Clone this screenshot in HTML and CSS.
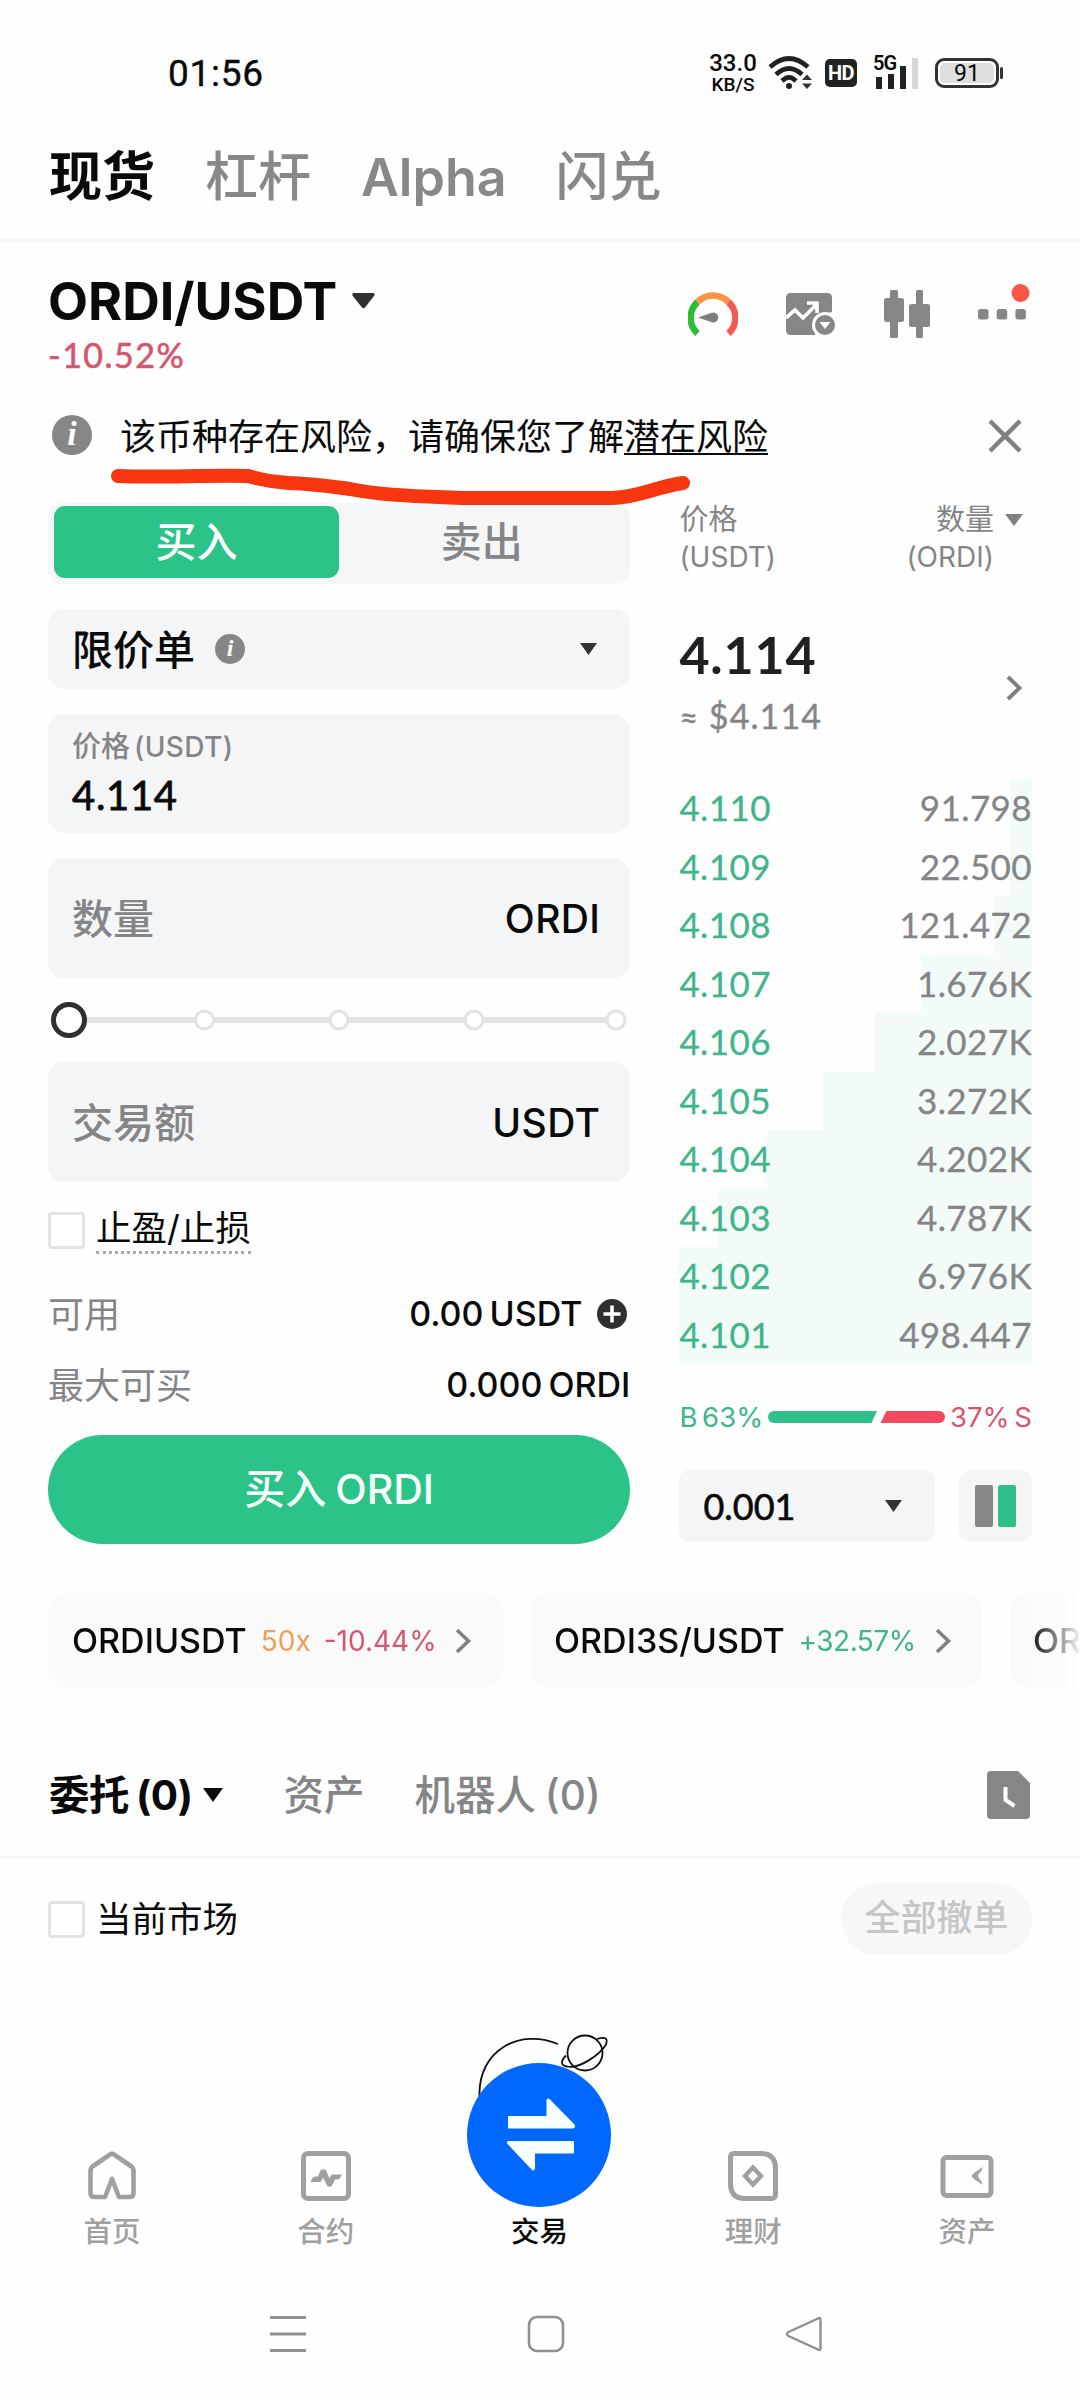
FILE: index.html
```html
<!DOCTYPE html>
<html lang="zh-CN">
<head>
<meta charset="utf-8">
<title>ORDI/USDT</title>
<link rel="stylesheet" href="styles.css">
</head>
<body>
<div class="screen">
  <header class="status">
    <span class="clock">01:56</span>
    <div class="status-right">
      <div class="speed"><b>33.0</b><span>KB/S</span></div>
      <svg class="wifi" width="46" height="34" viewBox="0 0 46 34"><g fill="none" stroke="#222" stroke-width="4.600"><path d="M2 11Q21 -6 40 11"/><path d="M8 18.500Q21 6.500 34 18.500"/><path d="M14 25Q21 18 28 25"/></g><circle cx="21" cy="30" r="3" fill="#222"/><path d="M34 24l5-5.500 5 5.500zM34 27.500l5 5.500 5-5.500z" fill="#333"/></svg>
      <span class="hd">HD</span>
      <div class="signal"><span class="gen">5G</span><svg width="44" height="32" viewBox="0 0 44 32"><path d="M1 20h6v12H1zM13 17h6v15h-6zM25 9h6v23h-6z" fill="#222"/><path d="M37 1h6v31h-6z" fill="#d8d8d8"/></svg></div>
      <div class="battery"><span>91</span></div>
    </div>
  </header>
  <nav class="top-tabs">
    <span class="tab t1 on">现货</span><span class="tab t2">杠杆</span><span class="tab t3">Alpha</span><span class="tab t4">闪兑</span>
  </nav>

  <section class="pair">
    <div class="pair-name">
      <h1><span>ORDI/USDT</span><svg width="23" height="16" viewBox="0 0 23 16"><path d="M1.500 0h20q2 1 .5 3L13 14.500q-1.500 1.500-3 0L.8 3Q-.5 1 1.500 0z" fill="#303030"/></svg></h1>
      <p class="change">-10.52%</p>
    </div>
    <div class="tools">
      <svg width="50" height="46" viewBox="0 0 50 46"><g fill="none" stroke-width="6.500"><path d="M9.500 43.500A21.500 21.500 0 0 1 9.500 12" stroke="#2ebc38"/><path d="M9.500 12A21.500 21.500 0 0 1 40.500 12" stroke="#fa9447"/><path d="M40.500 12A21.500 21.500 0 0 1 40.500 43.500" stroke="#f55a50"/></g><path d="M10 27.500L23 23a5 5 0 1 1 0 9z" fill="#7f7f82"/></svg>
      <svg width="50" height="46" viewBox="0 0 50 46"><path d="M5 0h36q5 0 5 5v14q-18 3-17 23H5q-5 0-5-5V5q0-5 5-5z" fill="#868689"/><path d="M0 25l9-8 8 8L31 11M21 10h10v10" fill="none" stroke="#fff" stroke-width="3.600"/><circle cx="39" cy="32" r="13" fill="#fff"/><circle cx="39" cy="32" r="10" fill="#868689"/><path d="M33.500 29h11L39 36z" fill="#fff"/></svg>
      <svg width="46" height="48" viewBox="0 0 46 48"><g fill="#868689"><rect x="6" width="8" height="48" rx="1.500"/><rect y="8" width="20" height="24" rx="2.500"/><rect x="32" width="7" height="48" rx="1.500"/><rect x="25" y="14" width="21" height="23" rx="2.500"/></g></svg>
      <svg width="52" height="36" viewBox="0 0 52 36"><g fill="#868689"><rect y="25" width="10.500" height="10.500" rx="2.500"/><rect x="18.700" y="25" width="10.500" height="10.500" rx="2.500"/><rect x="37.400" y="25" width="10.500" height="10.500" rx="2.500"/></g><circle cx="42.500" cy="9" r="9" fill="#fb5548"/></svg>
    </div>
  </section>

  <section class="notice">
    <i class="info big">i</i>
    <p>该币种存在风险，请确保您了解<u>潜在风险</u></p>
    <svg class="close" width="34" height="34" viewBox="0 0 34 34"><path d="M2 2l30 30M32 2L2 32" stroke="#808082" stroke-width="4.500"/></svg>
    <svg class="marker" width="590" height="50" viewBox="110 460 590 50"><path d="M118 476C160 478 200 475 248 476C262 480 273 482 289 483C318 484 335 487 350 489C385 496 420 496 461 498L613 498C640 497 655 487 683 483" fill="none" stroke="#f7360f" stroke-width="14" stroke-linecap="round"/></svg>
  </section>

  <main class="trade">
    <div class="form">
      <div class="seg"><span class="buy">买入</span><span class="sell">卖出</span></div>
      <div class="box type"><span class="strong">限价单</span><i class="info">i</i><svg class="end" width="17" height="12" viewBox="0 0 17 12"><path d="M0 0h17L8.500 12z" fill="#333"/></svg></div>
      <div class="box price"><label>价格<span>(USDT)</span></label><b>4.114</b></div>
      <div class="box amount"><span>数量</span><em>ORDI</em></div>
      <svg class="slider" width="582" height="40" viewBox="0 0 582 40"><path d="M20 20h548" stroke="#e2e2e2" stroke-width="6"/><circle cx="21" cy="20" r="15.500" fill="#fff" stroke="#303033" stroke-width="5"/><g fill="#fff" stroke="#e2e2e2" stroke-width="3"><circle cx="156.500" cy="20" r="9"/><circle cx="291" cy="20" r="9"/><circle cx="426" cy="20" r="9"/><circle cx="568" cy="20" r="9"/></g></svg>
      <div class="box total"><span>交易额</span><em>USDT</em></div>
      <div class="check tpsl"><i></i><span>止盈/止损</span></div>
      <div class="line avail"><span>可用</span><em>0.00 USDT</em><svg width="30" height="30" viewBox="0 0 30 30"><circle cx="15" cy="15" r="15" fill="#303033"/><path d="M15 6.500v17M6.500 15h17" stroke="#fff" stroke-width="3.500"/></svg></div>
      <div class="line max"><span>最大可买</span><em>0.000 ORDI</em></div>
      <div class="submit">买入 ORDI</div>
    </div>
    <div class="book">
      <div class="book-head">
        <div>价格<br><span>(USDT)</span></div>
        <div class="r">数量<br><span>(ORDI)</span></div>
        <svg width="18" height="12" viewBox="0 0 18 12"><path d="M0 0h18L9 12z" fill="#808082"/></svg>
      </div>
      <div class="last"><div><b>4.114</b><p><span>≈</span> $4.114</p></div><svg width="18" height="26" viewBox="0 0 18 26"><path d="M3 2l11.500 11L3 24" fill="none" stroke="#808082" stroke-width="4"/></svg></div>
      <div class="rows">
        <div class="row"><i style="width:22px"></i><span>4.110</span><em>91.798</em></div>
        <div class="row"><i style="width:22px"></i><span>4.109</span><em>22.500</em></div>
        <div class="row"><i style="width:38px"></i><span>4.108</span><em>121.472</em></div>
        <div class="row"><i style="width:111px"></i><span>4.107</span><em>1.676K</em></div>
        <div class="row"><i style="width:157px"></i><span>4.106</span><em>2.027K</em></div>
        <div class="row"><i style="width:209px"></i><span>4.105</span><em>3.272K</em></div>
        <div class="row"><i style="width:265px"></i><span>4.104</span><em>4.202K</em></div>
        <div class="row"><i style="width:314px"></i><span>4.103</span><em>4.787K</em></div>
        <div class="row"><i style="width:353px"></i><span>4.102</span><em>6.976K</em></div>
        <div class="row"><i style="width:353px"></i><span>4.101</span><em>498.447</em></div>
      </div>
      <div class="ratio"><span class="g">B 63%</span><svg width="177" height="12" viewBox="0 0 177 12"><path d="M6 0h103l-5.500 12H6A6 6 0 0 1 6 0z" fill="#2fc08a"/><path d="M118.500 0H171a6 6 0 0 1 0 12h-58.500z" fill="#f24a5c"/></svg><span class="d">37% S</span></div>
      <div class="book-foot">
        <div class="step"><span>0.001</span><svg width="17" height="12" viewBox="0 0 17 12"><path d="M0 0h17L8.500 12z" fill="#333"/></svg></div>
        <div class="layout"><i></i><i class="green"></i></div>
      </div>
    </div>
  </main>

  <section class="pills">
    <div class="pill p1"><b>ORDIUSDT</b><span class="o">50x</span><span class="d">-10.44%</span><svg width="18" height="26" viewBox="0 0 18 26"><path d="M3 2l11.500 11L3 24" fill="none" stroke="#808082" stroke-width="3.500"/></svg></div>
    <div class="pill p2"><b>ORDI3S/USDT</b><span class="g">+32.57%</span><svg width="18" height="26" viewBox="0 0 18 26"><path d="M3 2l11.500 11L3 24" fill="none" stroke="#808082" stroke-width="3.500"/></svg></div>
    <div class="pill p3"><b>OR</b></div>
  </section>

  <nav class="order-tabs">
    <span class="o1">委托 (0)</span><svg class="caret" width="20" height="14" viewBox="0 0 20 14"><path d="M0 0h20L10 14z" fill="#0a0a0a"/></svg><span class="o2">资产</span><span class="o3">机器人 (0)</span>
    <svg class="end" width="43" height="48" viewBox="0 0 43 48"><path d="M4 0h27l12 12v32q0 4-4 4H4q-4 0-4-4V4q0-4 4-4z" fill="#868689"/><path d="M18.500 16v13l9 6" fill="none" stroke="#fff" stroke-width="4"/></svg>
  </nav>
  <section class="filter"><div class="check"><i></i><span>当前市场</span></div><div class="cancel">全部撤单</div></section>

  <nav class="bottom">
    <div class="item"><svg width="54" height="54" viewBox="0 0 54 54"><path d="M5.500 21Q5.500 19 7.500 17.500L25 5.500q2-1.500 4 0l17.500 12q2 1.500 2 3.500V44q0 4-4 4H34L27 30 20 48H9.500q-4 0-4-4z" fill="none" stroke="#a0a0a0" stroke-width="4.600" stroke-linejoin="round"/></svg><span>首页</span></div>
    <div class="item"><svg width="54" height="54" viewBox="0 0 54 54"><rect x="4.500" y="4.500" width="45" height="45" rx="4.500" fill="none" stroke="#a0a0a0" stroke-width="5"/><path d="M11.500 33l2-4q1-1.500 3-1.500h2.500l2.500-6q.5-1 1.500-1h2.500q1 0 1.500 1l3.500 8 1-2.500q.7-1.500 2-1.500H43l-2 3.500q-.8 1.500-2.500 1.500H36l-3 6q-.5 1-1.500 1h-2q-1 0-1.500-1l-4-8-1 2.500q-.8 2-2.500 2z" fill="#a0a0a0"/></svg><span>合约</span></div>
    <div class="item active"><svg class="orb" width="152" height="182" viewBox="463 2028 152 182"><g fill="none" stroke="#111" stroke-width="1.800"><path d="M479.500 2096C478 2050 520 2028 558 2044"/><circle cx="585" cy="2053" r="17.500"/><path d="M597 2039c9-2.500 11-.5 9 5.500-6 10-27 25-39 22-7-1-6-6-1-11"/></g><circle cx="539" cy="2135" r="72" fill="#0168fe"/><path d="M509 2116h37.500v-16q1.500-2.500 3.500-.5l24.500 25q1.500 3.500-1.500 4h-64q-1 0-1-1v-10.500q0-1 1-1zM508 2141h65q1 0 1 1v10.500q0 1-1 1h-38v15.500q-1.500 2.500-3.500.5L507.500 2144q-1.500-2 .5-3z" fill="#f8ffff"/></svg><span>交易</span></div>
    <div class="item"><svg width="54" height="54" viewBox="0 0 54 54"><path d="M8 4.500h27q14.500 0 14.500 15v26q0 4-4 4H19q-14.500 0-14.500-15v-26q0-4 3.500-4z" fill="none" stroke="#a0a0a0" stroke-width="5"/><path d="M27 18.500l8 8.500-8 8.500-8-8.500z" fill="none" stroke="#a0a0a0" stroke-width="4.400"/></svg><span>理财</span></div>
    <div class="item"><svg width="54" height="54" viewBox="0 0 54 54"><rect x="3" y="8.500" width="48" height="38" rx="3.500" fill="none" stroke="#a0a0a0" stroke-width="5"/><path d="M42.500 18q0 3-2.500 5.500-4 3.500 0 7 2.500 2.500 2.500 5.500L33.500 29.500q-3.500-2.500 0-5z" fill="#a0a0a0"/></svg><span>资产</span></div>
  </nav>
  <footer class="system">
    <svg width="38" height="38" viewBox="0 0 38 38"><path d="M1 2.500h36M1 19h36M1 35.500h36" stroke="#909090" stroke-width="3"/></svg>
    <svg width="38" height="38" viewBox="0 0 38 38"><rect x="2" y="2" width="34" height="34" rx="8" fill="none" stroke="#909090" stroke-width="2.600"/></svg>
    <svg width="38" height="38" viewBox="0 0 38 38"><path d="M33 3.500Q35.500 2 35.500 5v28q0 3-2.500 1.500L3.500 21q-3-2 0-4z" fill="none" stroke="#909090" stroke-width="2.400"/></svg>
  </footer>
</div>
</body>
</html>
```
FILE: styles.css
```css
* { box-sizing: border-box; margin: 0; padding: 0; }
body { background: #fefefe; color: #0a0a0a; font-family: Inter, "Noto Sans CJK SC", sans-serif; }
i, em { font-style: normal; }
svg { display: block; flex: none; }
span, em, b { white-space: nowrap; }
.screen { width: 1080px; height: 2400px; display: flex; flex-direction: column; overflow: hidden; }
.screen > * { flex: none; }

.status { height: 118px; padding: 27px 76px 0 168px; display: flex; justify-content: space-between; align-items: flex-start; }
.clock { font: 400 37px/93px Roboto, sans-serif; letter-spacing: .7px; -webkit-text-stroke: .4px; }
.status-right { display: flex; height: 92px; align-items: center; }
.speed { width: 52px; height: 44px; margin-right: 9px; display: flex; flex-direction: column; align-items: center; }
.speed b { font: 500 24px/24px Roboto, sans-serif; }
.speed span { font: 500 19px/20px Roboto, sans-serif; }
.wifi { margin-right: 11px; }
.hd { width: 32px; height: 28px; margin-right: 18px; border-radius: 5px; background: #222; color: #fff; font: 700 20px/29px Roboto, sans-serif; text-align: center; letter-spacing: -.5px; }
.signal { position: relative; margin-right: 16px; }
.gen { position: absolute; left: -2px; top: -4px; font: 600 20px/21px Roboto, sans-serif; letter-spacing: -1px; }
.battery { width: 64px; height: 30px; margin-right: 5px; border: 3px solid #333; border-radius: 9px; padding: 2px; position: relative; }
.battery span { display: block; height: 20px; border-radius: 5px; background: #dedede; font: 400 23px/21px Roboto, sans-serif; text-align: center; }
.battery::after { content: ""; position: absolute; right: -7px; top: 6px; width: 3px; height: 12px; border-radius: 2px; background: #333; }

.top-tabs { height: 124px; padding-left: 49px; border-bottom: 3px solid #f6f6f6; display: flex; gap: 50px; color: #888; font-size: 53px; font-weight: 500; line-height: 119px; }
.top-tabs .on { color: #0a0a0a; font-weight: 700; }
.top-tabs .t3 { font-weight: 600; font-size: 52px; }
.t4 { margin-left: -1px; }

.pair { height: 150px; padding: 30px 49px 0 48px; display: flex; justify-content: space-between; }
h1 { display: flex; align-items: center; gap: 15px; height: 58px; font-size: 52px; font-weight: 700; }
.change { margin-top: 6px; height: 40px; font: 400 34px/38px Lato, sans-serif; letter-spacing: 1.5px; color: #d4566f; -webkit-text-stroke: .6px; }
.tools { display: flex; align-items: flex-start; }
.tools svg:nth-child(1) { margin: 18px 48px 0 0; }
.tools svg:nth-child(2) { margin: 21px 48px 0 0; }
.tools svg:nth-child(3) { margin: 18px 49px 0 0; }
.tools svg:nth-child(4) { margin: 12px 1px 0 -1px; }

.info { flex: none; width: 30px; height: 30px; border-radius: 50%; background: #868689; color: #fff; font: italic 700 24px/28px "Liberation Serif", serif; text-align: center; }
.info.big { width: 40px; height: 40px; font-size: 34px; line-height: 38px; }
.notice { position: relative; height: 111px; padding: 14px 58px 0 52px; display: flex; align-items: flex-start; }
.notice .big { margin-top: 9px; }
.notice p { margin-left: 28px; font: 400 36px/57px "Noto Sans CJK SC", sans-serif; white-space: nowrap; }
.notice u { text-underline-offset: 3px; text-decoration-thickness: 2px; }
.close { margin: 13px 0 0 auto; }
.marker { position: absolute; left: 110px; top: 68px; }

.trade { height: 1090px; padding: 0 48px; display: flex; gap: 49px; }
.form { width: 583px; }
.seg { height: 81px; padding: 3px 6px; border-radius: 14px; background: #f5f6f7; display: flex; font-size: 41px; font-weight: 500; line-height: 73px; text-align: center; }
.buy { width: 285px; height: 72px; border-radius: 11px; background: #2cc388; color: #fff; }
.sell { flex: 1; color: #858587; }
.box { border-radius: 16px; background: #f4f5f6; padding: 0 24px; display: flex; align-items: center; font-size: 41px; font-weight: 500; color: #858587; }
.box span { position: relative; top: -2px; }
.box em { margin-left: auto; padding-right: 6px; font-size: 39px; letter-spacing: .4px; color: #0a0a0a; }
.type { height: 80px; margin-top: 25px; }
.type .strong { color: #0a0a0a; }
.type .info { margin-left: 20px; }
.type .end { margin: 0 9px 0 auto; }
.price { height: 119px; margin-top: 25px; flex-direction: column; align-items: flex-start; padding-top: 10px; }
.price label { font-size: 29px; line-height: 45px; }
.price label span { margin-left: 4px; font-size: 28px; letter-spacing: .4px; top: 0; }
.price b { margin-top: 1px; font: 400 40px/48px Lato, sans-serif; letter-spacing: .7px; color: #0a0a0a; -webkit-text-stroke: .8px; }
.amount { height: 120px; margin-top: 25px; }
.slider { margin-top: 22px; }
.total { height: 120px; margin-top: 22px; }
.check { display: flex; align-items: center; gap: 11px; font-size: 35.5px; }
.check i { width: 37px; height: 37px; border: 3px solid #e3e3e3; border-radius: 4px; background: #fff; }
.tpsl { margin-top: 25px; height: 47px; }
.tpsl span { height: 47px; line-height: 44px; border-bottom: 3px dotted #aaa; }
.line { display: flex; align-items: center; height: 71px; font-size: 36px; color: #858587; }
.line span { position: relative; top: -2px; }
.line em { margin-left: auto; color: #0a0a0a; font-weight: 500; font-size: 34px; word-spacing: -3px; }
.line svg { margin: 0 3px 0 15px; }
.avail { margin-top: 24px; }
.submit { height: 109px; margin-top: 15px; border-radius: 55px; background: #2cc388; color: #f7fffb; text-align: center; font-size: 41px; font-weight: 500; line-height: 109px; word-spacing: -2px; }

.book { width: 353px; }
.book-head { display: flex; height: 100px; font-size: 29px; line-height: 37px; color: #858587; }
.book-head div { margin-top: -2px; }
.book-head span { font-size: 28px; }
.book-head .r { margin-left: auto; text-align: right; }
.book-head svg { margin: 11px 9px 0 11px; }
.last { height: 176px; padding: 18px 9px 0 0; display: flex; justify-content: space-between; }
.last b { display: block; height: 66px; font: 700 52px/66px Lato, sans-serif; letter-spacing: .8px; color: #202024; }
.last p { height: 54px; font: 400 34px/57px Lato, sans-serif; letter-spacing: 1.1px; color: #858587; -webkit-text-stroke: .4px; }
.last p span { font-size: 32px; }
.last svg { margin-top: 54px; }
.row { position: relative; height: 58.5px; display: flex; justify-content: space-between; font: 400 35px/56px Lato, sans-serif; letter-spacing: .4px; color: #3fb58b; -webkit-text-stroke: .3px; }
.row i { position: absolute; right: 0; top: 0; height: 100%; background: #f2fbf8; }
.row span, .row em { position: relative; }
.row em { color: #858587; }
.ratio { height: 106px; display: flex; align-items: center; justify-content: space-between; font-size: 27.5px; word-spacing: -3px; }
.g { color: #3fb58b; }
.d { color: #d4566f; }
.o { color: #f0a050; }
.book-foot { display: flex; justify-content: space-between; height: 72px; }
.step { width: 256px; padding: 0 33px 0 24px; border-radius: 10px; background: #f4f5f6; display: flex; align-items: center; justify-content: space-between; font: 400 36px/72px Lato, sans-serif; -webkit-text-stroke: .6px; }
.layout { width: 73px; border-radius: 12px; background: #f5f5f5; display: flex; align-items: center; justify-content: center; gap: 5px; }
.layout i { width: 18px; height: 42px; border-radius: 2px; background: #868689; }
.layout .green { background: #2fc08a; }

.pills { height: 95px; padding-left: 48px; display: flex; gap: 28px; -webkit-mask-image: linear-gradient(90deg, #000 1030px, transparent 1082px); mask-image: linear-gradient(90deg, #000 1030px, transparent 1082px); }
.pill { flex: none; padding: 0 23px; border-radius: 18px; background: #fafafa; display: flex; align-items: center; font-size: 28px; }
.pill b { font-size: 34px; font-weight: 500; margin-right: 14px; }
.pill svg { margin-left: auto; }
.pill .g { letter-spacing: -.5px; }
.p1 { width: 455px; padding-left: 24px; padding-right: 31px; }
.p2 { width: 451px; padding-right: 30px; }
.p3 { width: 200px; }
.o { margin-right: 13px; }

.order-tabs { height: 171px; padding: 46px 50px 0 49px; border-bottom: 3px solid #f6f6f6; display: flex; align-items: center; font-size: 40.5px; font-weight: 500; color: #858587; }
.order-tabs span { line-height: 125px; word-spacing: -2px; }
.o1 { color: #0a0a0a; font-weight: 700; letter-spacing: -.5px; }
.caret { margin: 0 60px 0 11px; }
.o3 { margin-left: 50px; }
.order-tabs .end { margin-left: auto; }
.filter { height: 150px; padding: 24px 48px 0; display: flex; justify-content: space-between; align-items: flex-start; }
.filter .check { height: 72px; }
.filter .check span { position: relative; top: -3px; }
.cancel { width: 191px; height: 72px; border-radius: 36px; background: #f7f7f8; color: #c4c6c8; text-align: center; font-size: 36px; font-weight: 500; line-height: 71px; }

.bottom { height: 243px; padding: 0 6px 0 5px; display: grid; grid-template-columns: repeat(5, 1fr); }
.item { display: flex; flex-direction: column; align-items: center; justify-content: flex-end; height: 243px; font-size: 28.5px; font-weight: 500; color: #a0a0a0; }
.item span { height: 42px; line-height: 43px; margin-top: 7px; }
.active { color: #0a0a0a; }
.active span { margin-top: 0; }
.system { height: 147px; padding: 63px 257px 0 269px; display: flex; justify-content: space-between; }
```
